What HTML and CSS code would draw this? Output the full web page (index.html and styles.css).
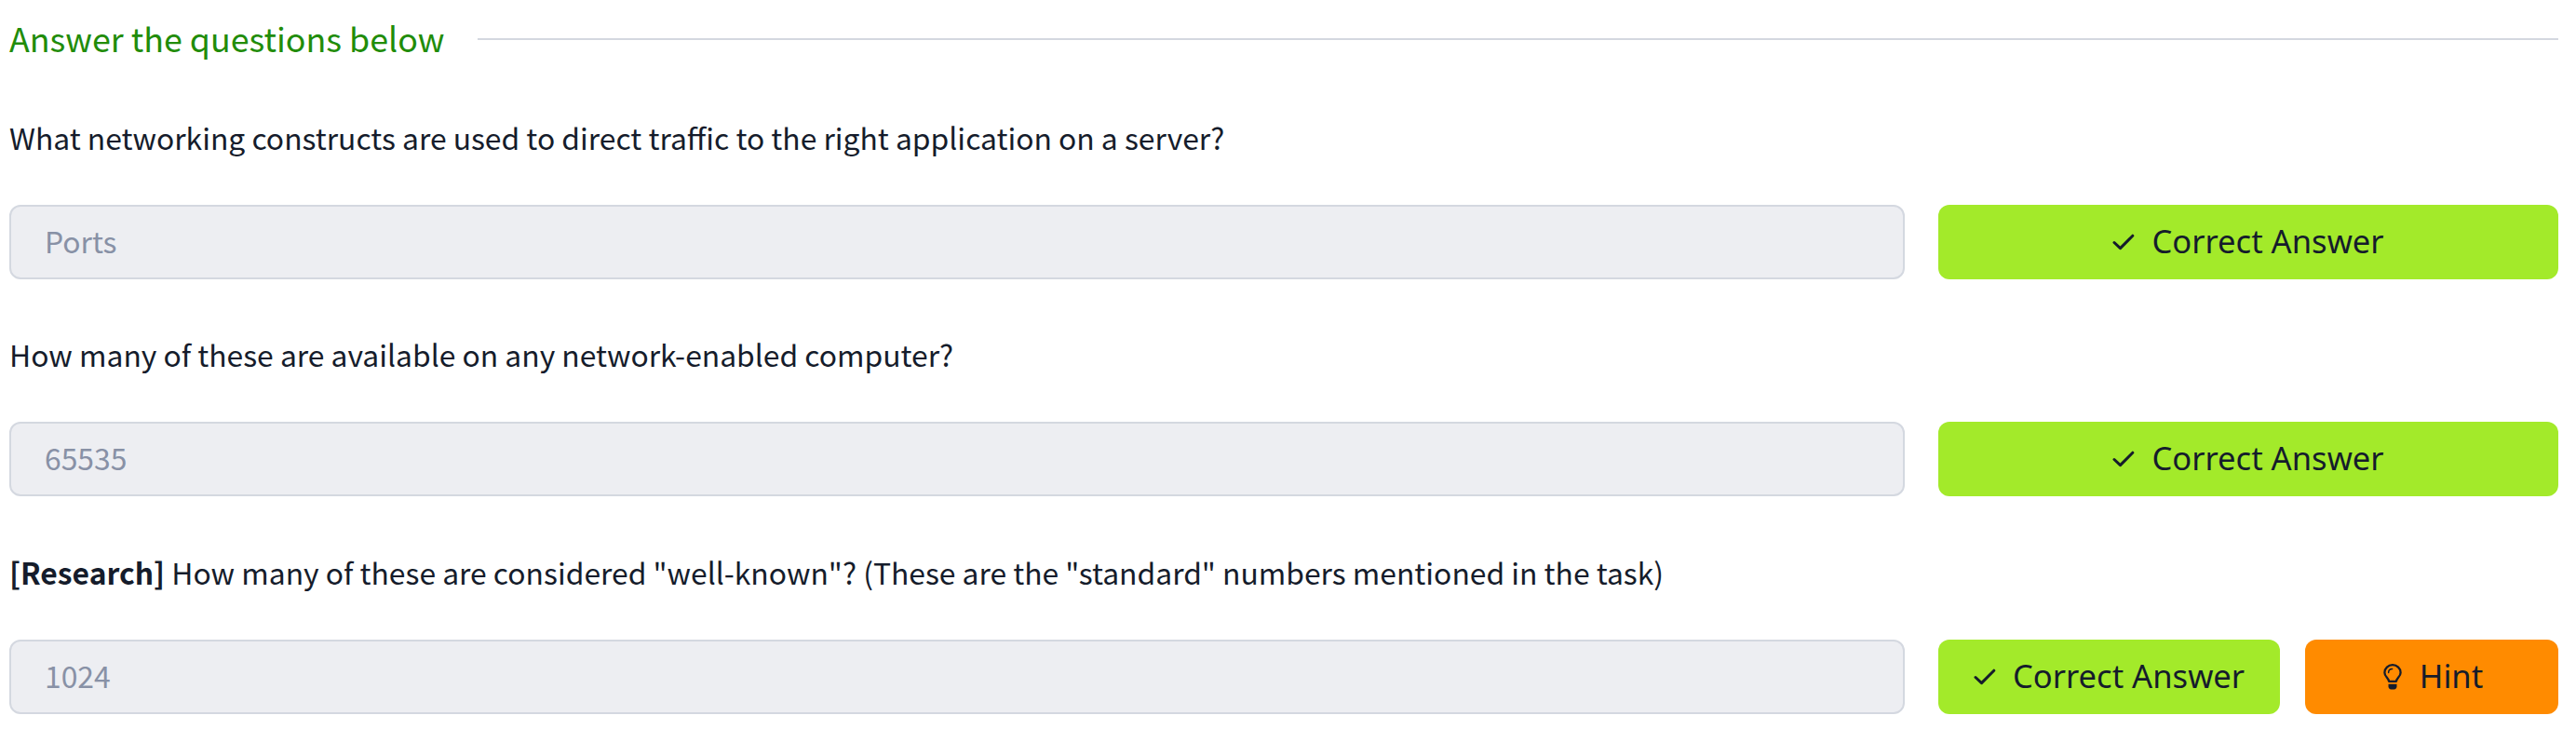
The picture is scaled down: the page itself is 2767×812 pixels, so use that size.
FILE: index.html
```html
<!DOCTYPE html>
<html lang="en">
<head>
<meta charset="utf-8">
<title>Questions</title>
<link rel="stylesheet" href="styles.css">
</head>
<body>
<svg width="0" height="0" class="sprite" aria-hidden="true">
  <symbol id="check" viewBox="0 0 24 18"><path d="M2 9.5 8.5 15.6 21.8 2.2" fill="none" stroke="currentColor" stroke-width="3" stroke-linecap="round" stroke-linejoin="round"/></symbol>
  <symbol id="bulb" viewBox="0 0 20 28"><path d="M6 18.800C6 15.400 1.400 13.800 1.400 9.400a8.600 8.200 0 0 1 17.200 0c0 4.400-4.600 6-4.600 9.400Z" fill="none" stroke="currentColor" stroke-width="2.300" stroke-linejoin="round"/><path d="M5.600 9.400c0-2.300 1.600-4 4-4" fill="none" stroke="currentColor" stroke-width="1.500" stroke-linecap="round"/><path d="M5.500 21.800h9v2.400c0 1.800-1.200 3.300-3 3.300h-3c-1.800 0-3-1.500-3-3.300Z" fill="currentColor"/></symbol>
</svg>
<main class="questions">
  <header class="section-head">
    <h2 class="section-title">Answer the questions below</h2>
    <span class="rule"></span>
  </header>
  <section class="question">
    <p class="prompt">What networking constructs are used to direct traffic to the right application on a server?</p>
    <div class="answer-row">
      <div class="answer">Ports</div>
      <div class="actions"><div class="btn btn-correct"><svg class="icon-check"><use href="#check"/></svg><span class="label">Correct Answer</span></div></div>
    </div>
  </section>
  <section class="question">
    <p class="prompt">How many of these are available on any network-enabled computer?</p>
    <div class="answer-row">
      <div class="answer">65535</div>
      <div class="actions"><div class="btn btn-correct"><svg class="icon-check"><use href="#check"/></svg><span class="label">Correct Answer</span></div></div>
    </div>
  </section>
  <section class="question">
    <p class="prompt"><strong>[Research]</strong> How many of these are considered "well-known"? (These are the "standard" numbers mentioned in the task)</p>
    <div class="answer-row">
      <div class="answer">1024</div>
      <div class="actions"><div class="btn btn-correct"><svg class="icon-check"><use href="#check"/></svg><span class="label">Correct Answer</span></div><div class="btn btn-hint"><svg class="icon-bulb"><use href="#bulb"/></svg><span class="label">Hint</span></div></div>
    </div>
  </section>
</main>
</body>
</html>
```
FILE: styles.css
```css
* { box-sizing: border-box; }
body {
  margin: 0;
  background: #fff;
  color: #151c2b;
  font-family: "Noto Sans CJK SC", "Noto Sans", sans-serif;
  font-size: 31.83px;
  overflow: hidden;
}
.sprite { display: block; position: absolute; }
.questions { padding: 0 19px 0 10px; }
.section-head { display: flex; align-items: center; height: 84px; margin-bottom: 22px; }
.section-title {
  width: 503px;
  margin: 0;
  padding-bottom: 3px;
  flex: none;
  color: #218c09;
  font-size: 35.8px;
  font-weight: 400;
  line-height: 81px;
  white-space: nowrap;
}
.rule { flex: 1; height: 2px; background: #d4d8e0; }
.question + .question { margin-top: 39px; }
.question:last-child { margin-top: 40px; }
.prompt { margin: 0 0 32px; line-height: 82px; white-space: nowrap; }
.prompt strong { font-weight: 700; }
.answer-row { display: flex; gap: 36px; height: 80px; }
.answer {
  flex: 1;
  padding-left: 36px;
  border: 2px solid #d4d8e0;
  border-radius: 12px;
  background: #edeef2;
  color: #8891a6;
  line-height: 73px;
}
.actions { display: flex; gap: 27px; width: 666px; }
.btn {
  flex: 1;
  display: flex;
  align-items: center;
  justify-content: center;
  border-radius: 12px;
  font-family: "Noto Sans", sans-serif;
  font-size: 34.6px;
  line-height: 78px;
  white-space: nowrap;
}
.label { padding-bottom: 2px; }
.btn-correct { gap: 18px; background: #a3ea2a; }
.btn-hint { flex: none; width: 272px; gap: 19px; padding-left: 3px; background: #ff8b00; }
.icon-check { width: 24px; height: 18px; flex: none; }
.icon-bulb { width: 20px; height: 28px; flex: none; }
```
